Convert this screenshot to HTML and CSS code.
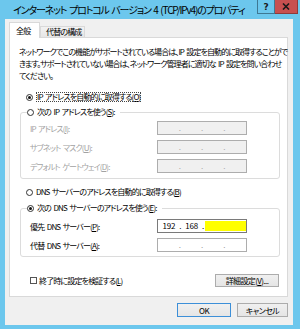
FILE: index.html
```html
<!DOCTYPE html>
<html lang="ja">
<head>
<meta charset="utf-8">
<link rel="stylesheet" href="styles.css">
</head>
<body>
<div class="window">
  <div class="titlebar">
    <div class="title">インターネット プロトコル バージョン 4 (TCP/IPv4)のプロパティ</div>
    <div class="caption-btns">
      <div class="cap help">?</div>
      <div class="cap close"><svg width="8" height="7" viewBox="0 0 8 7"><path d="M1 0.5 L7 6.5 M7 0.5 L1 6.5" stroke="#1a1a1a" stroke-width="1.6" fill="none"/></svg></div>
    </div>
  </div>
  <div class="client">
    <div class="tabs">
      <div class="tab active">全般</div>
      <div class="tab">代替の構成</div>
    </div>
    <div class="panel">
      <p class="desc">ネットワークでこの機能がサポートされている場合は、IP 設定を自動的に取得することがで<br>きます。サポートされていない場合は、ネットワーク管理者に適切な IP 設定を問い合わせ<br>てください。</p>
      <div class="option opt-auto-ip"><span class="radio checked"></span><span class="focus">IP アドレスを自動的に取得する(<u>O</u>)</span></div>
      <fieldset class="group group-ip">
        <legend class="option"><span class="radio"></span><span>次の IP アドレスを使う(<u>S</u>):</span></legend>
        <div class="field disabled"><span class="label">IP アドレス(<u>I</u>):</span><div class="ipbox off"><span class="seg"></span><span class="dot">.</span><span class="seg"></span><span class="dot">.</span><span class="seg"></span><span class="dot">.</span><span class="seg"></span></div></div>
        <div class="field disabled"><span class="label">サブネット マスク(<u>U</u>):</span><div class="ipbox off"><span class="seg"></span><span class="dot">.</span><span class="seg"></span><span class="dot">.</span><span class="seg"></span><span class="dot">.</span><span class="seg"></span></div></div>
        <div class="field disabled"><span class="label">デフォルト ゲートウェイ(<u>D</u>):</span><div class="ipbox off"><span class="seg"></span><span class="dot">.</span><span class="seg"></span><span class="dot">.</span><span class="seg"></span><span class="dot">.</span><span class="seg"></span></div></div>
      </fieldset>
      <div class="option opt-auto-dns"><span class="radio"></span><span>DNS サーバーのアドレスを自動的に取得する(<u>B</u>)</span></div>
      <fieldset class="group group-dns">
        <legend class="option"><span class="radio checked"></span><span>次の DNS サーバーのアドレスを使う(<u>E</u>):</span></legend>
        <div class="field"><span class="label">優先 DNS サーバー(<u>P</u>):</span><div class="ipbox on focused"><span class="seg">192</span><span class="dot">.</span><span class="seg">168</span><span class="dot">.</span><span class="redact"></span></div></div>
        <div class="field"><span class="label">代替 DNS サーバー(<u>A</u>):</span><div class="ipbox on"><span class="seg"></span><span class="dot">.</span><span class="seg"></span><span class="dot">.</span><span class="seg"></span><span class="dot">.</span><span class="seg"></span></div></div>
      </fieldset>
      <div class="footer-row">
        <div class="option"><span class="check"></span><span>終了時に設定を検証する(<u>L</u>)</span></div>
        <button class="btn btn-adv">詳細設定(<u>V</u>)...</button>
      </div>
    </div>
    <div class="actions">
      <button class="btn btn-ok">OK</button>
      <button class="btn btn-cancel">キャンセル</button>
    </div>
  </div>
</div>
</body>
</html>
```
FILE: styles.css
```css
* { box-sizing: border-box; }
body {
  margin: 0;
  font-family: "Noto Sans CJK JP", "Noto Sans", sans-serif;
  font-size: 8px;
  letter-spacing: -0.85px;
  word-spacing: 1.5px;
  font-feature-settings: "palt";
  color: #000;
}
u { text-decoration: underline; text-underline-offset: 1px; }

.window {
  width: 300px;
  height: 329px;
  background: #6cc7ed;
  display: flex;
  flex-direction: column;
}
.titlebar {
  height: 19px;
  display: flex;
  align-items: flex-start;
}
.title {
  flex: 1;
  padding: 3px 0 0 13px;
  font-size: 10px;
  letter-spacing: -1.15px;
  word-spacing: 1.5px;
  line-height: 14px;
  white-space: nowrap;
  overflow: hidden;
}
.caption-btns {
  display: flex;
  margin-right: 2px;
}
.cap {
  height: 14px;
  display: flex;
  align-items: center;
  justify-content: center;
}
.help {
  width: 18px;
  border: 1px solid #3e7893;
  border-top: none;
  font-family: "DejaVu Sans", sans-serif;
  font-weight: bold;
  font-size: 9px;
  letter-spacing: 0;
  color: #1a1a1a;
}
.close {
  width: 23px;
  background: #c75050;
  border: 1px solid #8f3a3a;
  border-top: none;
  border-left: none;
}

.client {
  flex: 1;
  margin: 0 7px 4px 5px;
  background: #f0f0f0;
  padding: 3px 5px 0 4px;
  display: flex;
  flex-direction: column;
}
.tabs {
  height: 15px;
  display: flex;
  align-items: flex-end;
}
.tab {
  height: 11px;
  border: 1px solid #d9d9d9;
  border-bottom: none;
  padding: 0 3px 0 5px;
  line-height: 10px;
  background: linear-gradient(#f2f2f2, #e6e6e6);
  white-space: nowrap;
}
.tab.active {
  position: relative;
  z-index: 1;
  height: 16px;
  width: 31px;
  margin-bottom: -1px;
  background: #fff;
  line-height: 16px;
  padding-left: 6px;
}
.panel {
  height: 260px;
  background: #fff;
  border: 1px solid #d9d9d9;
  display: flex;
  flex-direction: column;
}
.desc {
  margin: 8px 0 0 9px;
  line-height: 12px;
  letter-spacing: -0.92px;
  white-space: nowrap;
}
.option {
  display: flex;
  align-items: center;
  height: 12px;
  line-height: 12px;
  white-space: nowrap;
}
.opt-auto-ip { margin: 9px 0 0 16px; }
.opt-auto-dns { margin: 7px 0 0 16px; }
.radio {
  width: 7px;
  height: 7px;
  border: 1px solid #333;
  border-radius: 50%;
  background: #fff;
  margin-right: 3px;
  display: flex;
  align-items: center;
  justify-content: center;
  flex: none;
}
.radio.checked::after {
  content: "";
  width: 3px;
  height: 3px;
  border-radius: 50%;
  background: #111;
}
.check {
  width: 7px;
  height: 7px;
  border: 1px solid #555;
  background: #fff;
  margin-right: 2px;
  flex: none;
}
.focus {
  outline: 1px dotted #444;
  outline-offset: -1px;
  padding: 0 1px;
  line-height: 10px;
  height: 10px;
  display: flex;
  align-items: center;
}

.group {
  margin: 3px 7px 0 10px;
  padding: 3px 0 5px 9px;
  border: 1px solid #dcdcdc;
  border-radius: 3px;
  min-width: 0;
  display: flex;
  flex-direction: column;
  gap: 5px;
}
.group legend {
  padding: 0 5px 0 0;
  margin-left: -3px;
}
.group-dns { margin-top: 4px; padding-top: 5px; padding-bottom: 4px; }

.field {
  display: flex;
  align-items: center;
  height: 14px;
  white-space: nowrap;
}
.field .label { width: 127px; }
.field.disabled .label { color: #a2a2a2; }

.ipbox {
  width: 90px;
  height: 14px;
  border: 1px solid #adadad;
  display: flex;
  align-items: center;
  letter-spacing: -0.2px;
}
.ipbox.off { background: #f0f0f0; color: #a8a8a8; }
.ipbox.on { background: #fff; color: #9a9a9a; }
.ipbox.focused { border-color: #7a7a7a; color: #000; }
.seg { flex: 1; text-align: center; line-height: 12px; }
.dot { width: 1px; line-height: 12px; display: flex; justify-content: center; }
.redact {
  flex: 1.9;
  align-self: stretch;
  margin: 1px 0 1px 1px;
  background: #ffff00;
}

.footer-row {
  margin: 17px 8px 0 20px;
  display: flex;
  align-items: center;
  justify-content: space-between;
}
.btn {
  font-family: inherit;
  font-size: 8px;
  letter-spacing: -0.6px;
  font-feature-settings: "palt";
  height: 13px;
  padding: 0;
  margin: 0;
  border: 1px solid #acacac;
  background: linear-gradient(#f0f0f0, #e5e5e5);
  color: #000;
  line-height: 11px;
}
.btn-adv { width: 64px; }
.actions {
  margin-top: 6px;
  display: flex;
  justify-content: flex-end;
  gap: 6px;
}
.actions .btn { height: 14px; }
.btn-ok { width: 54px; border-color: #3c8fd8; }
.btn-cancel { width: 51px; }
```
